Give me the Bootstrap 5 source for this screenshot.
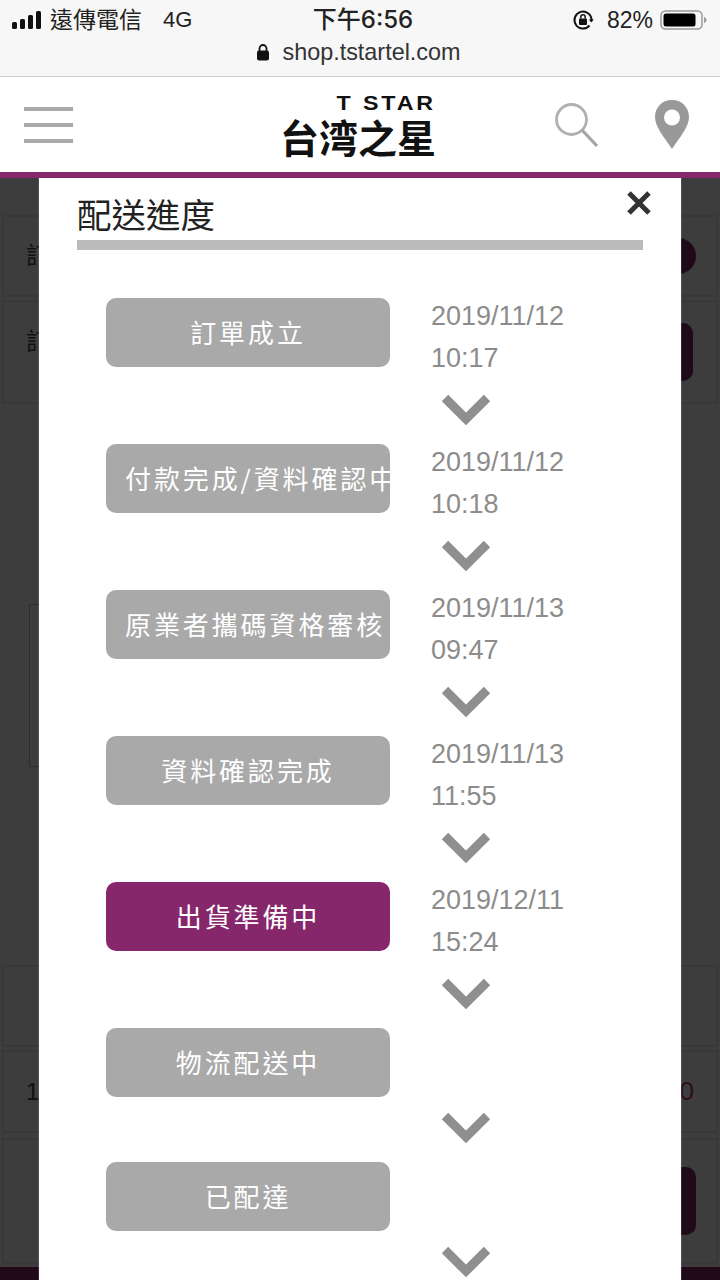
<!DOCTYPE html>
<html lang="zh-Hant">
<head>
    <meta charset="UTF-8">
    <meta name="viewport" content="width=device-width, initial-scale=1.0">
    <title>配送進度</title>
    <link href="https://cdn.jsdelivr.net/npm/bootstrap@5.3.0/dist/css/bootstrap.min.css" rel="stylesheet">
    <style>
        html, body {
            height: 1280px;
            overflow: hidden;
        }
        body {
            font-family: "Liberation Sans", "Noto Sans CJK TC", sans-serif;
            background: #fff;
        }
        .phone-bar {
            height: 77px;
            background: #f7f7f7;
            border-bottom: 1px solid #cfcfcf;
            color: #222;
            font-size: 23px;
            line-height: 28px;
            padding: 6px 12px 0;
        }
        .phone-side {
            flex: 1 1 0;
        }
        .phone-net {
            margin-left: 21px;
            font-size: 22px;
        }
        .phone-time {
            margin-left: 6px;
            font-weight: 500;
            font-family: "Inter", "Noto Sans CJK TC", sans-serif;
            font-size: 24px;
        }
        .phone-pct {
            margin: 0 7px 0 13px;
        }
        .phone-url {
            margin-top: 3px;
            font-size: 23.4px;
            line-height: 30px;
            color: #333;
            padding-right: 3px;
        }
        .site-head {
            height: 95px;
            padding: 0 30px 0 24px;
            position: relative;
        }
        .burger {
            width: 49px;
        }
        .burger i {
            display: block;
            height: 4px;
            background: #a9a9a9;
            margin: 12px 0;
        }
        .brand {
            position: absolute;
            left: 279px;
            top: 16px;
            width: 157px;
            text-align: right;
            color: #111;
        }
        .brand-en {
            font-family: "Liberation Sans", sans-serif;
            font-weight: 700;
            font-size: 20px;
            line-height: 20px;
            letter-spacing: 2.5px;
            transform: scaleX(1.16);
            transform-origin: right center;
        }
        .brand-zh {
            margin-top: 1px;
            font-family: "Noto Sans CJK TC", sans-serif;
            font-weight: 700;
            font-size: 39px;
            line-height: 44px;
            white-space: nowrap;
        }
        .brand-line {
            height: 6px;
            background: #87276b;
        }
        .search-icon {
            margin-right: -2px;
        }
        .pin-icon {
            margin-left: 56px;
        }
        .under-page {
            position: relative;
            height: 1102px;
            background: #fff;
            overflow: hidden;
            font-size: 24px;
            color: #444;
        }
        .under-row {
            margin: 0 2px;
            padding: 0 22px;
            background: #fff;
            border: 2px solid #ebebeb;
            align-items: center;
        }
        .under-row.r1 { height: 82px; margin-top: 37px; }
        .under-row.r2 { height: 104px; margin-top: 3px; }
        .under-box {
            height: 163px;
            margin: 200px 0 198px 29px;
            width: 640px;
            border: 1px solid #bbb;
        }
        .under-row.r3 { height: 82px; }
        .under-row.r4 { height: 83px; margin-top: 3px; }
        .under-row.r5 { height: 126px; margin-top: 5px; }
        .under-foot {
            height: 16px;
            margin-top: 3px;
            background: #87276b;
        }
        .under-label {
            margin-bottom: 20px;
        }
        .under-row.r1 .under-label {
            margin-bottom: 0;
        }
        .under-dot {
            width: 36px;
            height: 36px;
            margin-right: -2px;
            border-radius: 50%;
            background: #87276b;
        }
        .under-btn {
            width: 100px;
            border-radius: 10px;
            background: #87276b;
        }
        .under-row.r2 .under-btn { height: 58px; margin-right: 1px; }
        .under-row.r5 .under-btn { height: 68px; margin-right: -2px; }
        .under-price {
            color: #b63a8e;
            font-size: 26px;
        }
        .shade {
            position: absolute;
            inset: 0;
            background: rgba(0, 0, 0, .76);
        }
        .track-modal {
            position: absolute;
            left: 39px;
            top: 0;
            width: 642px;
            height: 1102px;
            background: #fff;
            box-shadow: 0 0 1px rgba(255, 255, 255, .7);
            padding: 0 38px;
        }
        .track-title {
            margin: 0;
            height: 72px;
            padding-top: 13px;
            font-family: "Noto Sans CJK TC", sans-serif;
            font-size: 34.5px;
            line-height: 44px;
            font-weight: 400;
            color: #222;
            border-bottom: 10px solid #bbb;
        }
        .track-close {
            position: absolute;
            right: 29px;
            top: 12px;
            width: 26px;
            height: 26px;
        }
        .track-list {
            padding: 48px 0 0 29px;
        }
        .step-row {
            display: flex;
            min-height: 69px;
        }
        .step-row.dated {
            height: 81px;
        }
        .step-pill {
            flex: none;
            width: 284px;
            height: 69px;
            padding: 0 19px;
            border-radius: 10px;
            background: #a9a9a9;
            color: #fff;
            font-family: "Noto Sans CJK TC", sans-serif;
            font-size: 26px;
            line-height: 67px;
            letter-spacing: 2.9px;
            text-align: center;
            white-space: nowrap;
        }
        .step-pill.now {
            background: #87276b;
        }
        .step-date {
            margin: -3px 0 0 41px;
            font-size: 27px;
            line-height: 42px;
            color: #8c8c8c;
        }
        .step-arrow {
            height: 65px;
            padding-top: 14px;
        }
        .step-arrow svg {
            display: block;
            margin-left: 335px;
        }
    </style>
</head>
<body>
    <div class="phone-bar">
        <div class="d-flex align-items-center">
            <div class="phone-side d-flex align-items-center">
                <svg width="30" height="18" viewBox="0 0 30 18" class="me-2">
                    <rect x="0" y="11" width="5" height="7" rx="1.5" fill="#111"/>
                    <rect x="8" y="8" width="5" height="10" rx="1.5" fill="#111"/>
                    <rect x="16" y="4" width="5" height="14" rx="1.5" fill="#111"/>
                    <rect x="24" y="0" width="5" height="18" rx="1.5" fill="#111"/>
                </svg>
                <span>遠傳電信</span>
                <span class="phone-net">4G</span>
            </div>
            <div class="phone-time">下午6:56</div>
            <div class="phone-side d-flex align-items-center justify-content-end">
                <svg width="22" height="22" viewBox="0 0 22 22">
                    <path d="M17.5 16.5A8.5 8.5 0 1 1 19.5 11" fill="none" stroke="#111" stroke-width="2"/>
                    <path d="M16.8 10.5h5l-2.5 3z" fill="#111"/>
                    <rect x="7" y="9.5" width="8" height="6.5" rx="1" fill="#111"/>
                    <path d="M8.8 9.5V8a2.2 2.2 0 0 1 4.4 0v1.5" fill="none" stroke="#111" stroke-width="1.5"/>
                </svg>
                <span class="phone-pct">82%</span>
                <svg width="48" height="20" viewBox="0 0 48 20">
                    <rect x="1" y="1" width="41" height="18" rx="4.5" fill="none" stroke="#999" stroke-width="1.5"/>
                    <rect x="3.5" y="3.5" width="32" height="13" rx="2.5" fill="#000"/>
                    <path d="M44 7v6c1.6-.5 2.5-1.6 2.5-3S45.600 7.500 44 7z" fill="#999"/>
                </svg>
            </div>
        </div>
        <div class="phone-url d-flex align-items-center justify-content-center">
            <svg width="14" height="17" viewBox="0 0 14 17" class="me-2">
                <rect x="1" y="6.500" width="12" height="10" rx="2" fill="#111"/>
                <path d="M3.500 7V4.500a3.500 3.500 0 0 1 7 0V7" fill="none" stroke="#111" stroke-width="1.800"/>
            </svg>
            <span class="ms-1">shop.tstartel.com</span>
        </div>
    </div>

    <header class="site-head d-flex align-items-center justify-content-between">
        <div class="burger"><i></i><i></i><i></i></div>
        <div class="brand">
            <div class="brand-en">T STAR</div>
            <div class="brand-zh">台湾之星</div>
        </div>
        <div class="d-flex align-items-center">
            <svg class="search-icon" width="46" height="46" viewBox="0 0 46 46">
                <circle cx="17.500" cy="17.500" r="15" fill="none" stroke="#b0b0b0" stroke-width="2.800"/>
                <path d="M28.500 28.500L43 44" stroke="#a4a4a4" stroke-width="3.200" fill="none"/>
            </svg>
            <svg class="pin-icon" width="36" height="50" viewBox="0 0 36 50">
                <path fill-rule="evenodd" fill="#999" d="M18 0C8 0 1 7.500 1 17c0 10 9 20 17 32 8-12 17-22 17-32C35 7.500 28 0 18 0zm0 9.500a8 8 0 1 1 0 16 8 8 0 0 1 0-16z"/>
            </svg>
        </div>
    </header>
    <div class="brand-line"></div>

    <main class="under-page">
        <div class="under-row r1 d-flex justify-content-between"><span class="under-label">訂單編號</span><span class="under-dot"></span></div>
        <div class="under-row r2 d-flex justify-content-between"><span class="under-label">訂單狀態</span><span class="under-btn"></span></div>
        <div class="under-box"></div>
        <div class="under-row r3"></div>
        <div class="under-row r4 d-flex justify-content-between"><span>1</span><span class="under-price">0</span></div>
        <div class="under-row r5 d-flex justify-content-end"><span class="under-btn"></span></div>
        <div class="under-foot"></div>

        <div class="shade"></div>

        <section class="track-modal">
            <h5 class="track-title">配送進度</h5>
            <svg class="track-close" viewBox="0 0 26 26">
                <path d="M3 3L23 23M23 3L3 23" stroke="#333" stroke-width="5" fill="none"/>
            </svg>
            <div class="track-list">
                <div class="step-row dated">
                    <div class="step-pill">訂單成立</div>
                    <div class="step-date">2019/11/12<br>10:17</div>
                </div>
                <div class="step-arrow"><svg width="50" height="34" viewBox="0 0 50 34"><path d="M4 5L25 26L46 5" fill="none" stroke="#8f8f8f" stroke-width="9"/></svg></div>
                <div class="step-row dated">
                    <div class="step-pill">付款完成/資料確認中</div>
                    <div class="step-date">2019/11/12<br>10:18</div>
                </div>
                <div class="step-arrow"><svg width="50" height="34" viewBox="0 0 50 34"><path d="M4 5L25 26L46 5" fill="none" stroke="#8f8f8f" stroke-width="9"/></svg></div>
                <div class="step-row dated">
                    <div class="step-pill">原業者攜碼資格審核</div>
                    <div class="step-date">2019/11/13<br>09:47</div>
                </div>
                <div class="step-arrow"><svg width="50" height="34" viewBox="0 0 50 34"><path d="M4 5L25 26L46 5" fill="none" stroke="#8f8f8f" stroke-width="9"/></svg></div>
                <div class="step-row dated">
                    <div class="step-pill">資料確認完成</div>
                    <div class="step-date">2019/11/13<br>11:55</div>
                </div>
                <div class="step-arrow"><svg width="50" height="34" viewBox="0 0 50 34"><path d="M4 5L25 26L46 5" fill="none" stroke="#8f8f8f" stroke-width="9"/></svg></div>
                <div class="step-row dated">
                    <div class="step-pill now">出貨準備中</div>
                    <div class="step-date">2019/12/11<br>15:24</div>
                </div>
                <div class="step-arrow"><svg width="50" height="34" viewBox="0 0 50 34"><path d="M4 5L25 26L46 5" fill="none" stroke="#8f8f8f" stroke-width="9"/></svg></div>
                <div class="step-row">
                    <div class="step-pill">物流配送中</div>
                </div>
                <div class="step-arrow"><svg width="50" height="34" viewBox="0 0 50 34"><path d="M4 5L25 26L46 5" fill="none" stroke="#8f8f8f" stroke-width="9"/></svg></div>
                <div class="step-row">
                    <div class="step-pill">已配達</div>
                </div>
                <div class="step-arrow"><svg width="50" height="34" viewBox="0 0 50 34"><path d="M4 5L25 26L46 5" fill="none" stroke="#8f8f8f" stroke-width="9"/></svg></div>
            </div>
        </section>
    </main>

    <script src="https://cdn.jsdelivr.net/npm/bootstrap@5.3.0/dist/js/bootstrap.bundle.min.js"></script>
</body>
</html>
